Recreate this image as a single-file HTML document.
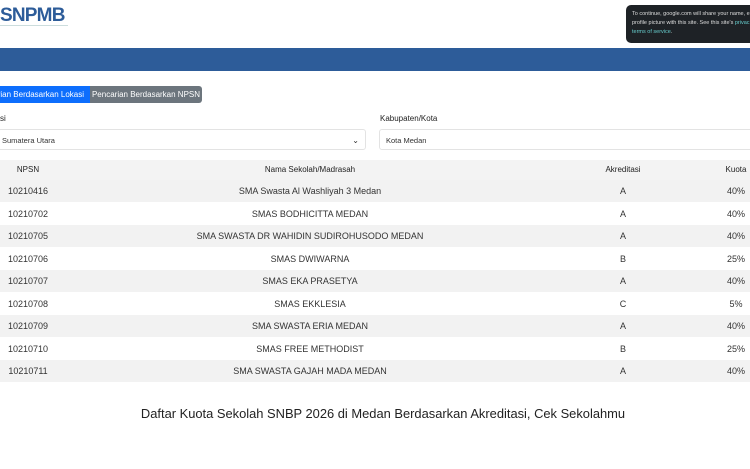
<html><head><style>
body{margin:0;width:750px;height:469px;background:#fff;font-family:"Liberation Sans",sans-serif;position:relative;overflow:hidden}
.a{position:absolute}
.row{position:absolute;left:0;width:750px;height:22px;font-size:9px;color:#333}
.row span{position:absolute;top:6px;transform:translateX(-50%);white-space:nowrap}
</style></head><body>
<div class="a" style="left:0;top:5px;font-size:19px;font-weight:bold;color:#2d5c99;letter-spacing:-0.8px">SNPMB</div>
<div class="a" style="left:0;top:25px;width:68px;height:1px;background:#cdd"></div>
<div class="a" style="left:626px;top:5px;width:130px;height:38px;background:#1e2226;border-radius:5px;color:#ddd;font-size:5.5px;line-height:9px;padding:5px 6px;box-sizing:border-box">To continue, google.com will share your name, e<br>profile picture with this site. See this site's <span style="color:#6cc">privac</span><br><span style="color:#6cc">terms of service</span>.</div>
<div class="a" style="left:0;top:48px;width:750px;height:23px;background:#2d5c99"></div>
<div class="a" style="left:0;top:86px;width:90px;height:17px;background:#0d6efd;color:#fff;font-size:8px;line-height:17px;overflow:hidden;white-space:nowrap"><span style="position:absolute;right:6px">carian Berdasarkan Lokasi</span></div>
<div class="a" style="left:90px;top:86px;width:112px;height:17px;background:#6c757d;color:#fff;font-size:8px;line-height:17px;text-align:center;border-radius:0 3px 3px 0;white-space:nowrap">Pencarian Berdasarkan NPSN</div>
<div class="a" style="left:0;top:114px;font-size:8px;color:#222">si</div>
<div class="a" style="left:380px;top:114px;font-size:8px;color:#222">Kabupaten/Kota</div>
<div class="a" style="left:-2px;top:129px;width:368px;height:21px;border:1px solid #e3e3e3;border-radius:3px;font-size:7.5px;line-height:21px;padding-left:3px;box-sizing:border-box;color:#333">Sumatera Utara<span style="position:absolute;right:6px;top:0;font-size:8px">&#8964;</span></div>
<div class="a" style="left:379px;top:129px;width:380px;height:21px;border:1px solid #e3e3e3;border-radius:3px;font-size:7.5px;line-height:21px;padding-left:6px;box-sizing:border-box;color:#333">Kota Medan</div>
<div class="row" style="top:160px;height:20px;background:#f3f3f3;font-size:8px;color:#222"><span style="left:28px;top:5px">NPSN</span><span style="left:310px;top:5px">Nama Sekolah/Madrasah</span><span style="left:623px;top:5px">Akreditasi</span><span style="left:736px;top:5px">Kuota</span></div>
<div class="row" style="top:180px;background:#f2f2f2"><span style="left:28px">10210416</span><span style="left:310px">SMA Swasta Al Washliyah 3 Medan</span><span style="left:623px">A</span><span style="left:736px">40%</span></div>
<div class="row" style="top:202.5px"><span style="left:28px">10210702</span><span style="left:310px">SMAS BODHICITTA MEDAN</span><span style="left:623px">A</span><span style="left:736px">40%</span></div>
<div class="row" style="top:225px;background:#f2f2f2"><span style="left:28px">10210705</span><span style="left:310px">SMA SWASTA DR WAHIDIN SUDIROHUSODO MEDAN</span><span style="left:623px">A</span><span style="left:736px">40%</span></div>
<div class="row" style="top:247.5px"><span style="left:28px">10210706</span><span style="left:310px">SMAS DWIWARNA</span><span style="left:623px">B</span><span style="left:736px">25%</span></div>
<div class="row" style="top:270px;background:#f2f2f2"><span style="left:28px">10210707</span><span style="left:310px">SMAS EKA PRASETYA</span><span style="left:623px">A</span><span style="left:736px">40%</span></div>
<div class="row" style="top:292.5px"><span style="left:28px">10210708</span><span style="left:310px">SMAS EKKLESIA</span><span style="left:623px">C</span><span style="left:736px">5%</span></div>
<div class="row" style="top:315px;background:#f2f2f2"><span style="left:28px">10210709</span><span style="left:310px">SMA SWASTA ERIA MEDAN</span><span style="left:623px">A</span><span style="left:736px">40%</span></div>
<div class="row" style="top:337.5px"><span style="left:28px">10210710</span><span style="left:310px">SMAS FREE METHODIST</span><span style="left:623px">B</span><span style="left:736px">25%</span></div>
<div class="row" style="top:360px;background:#f2f2f2"><span style="left:28px">10210711</span><span style="left:310px">SMA SWASTA GAJAH MADA MEDAN</span><span style="left:623px">A</span><span style="left:736px">40%</span></div>
<div class="a" style="left:0;top:406px;width:766px;text-align:center;font-size:12.9px;color:#222">Daftar Kuota Sekolah SNBP 2026 di Medan Berdasarkan Akreditasi, Cek Sekolahmu</div>
</body></html>
